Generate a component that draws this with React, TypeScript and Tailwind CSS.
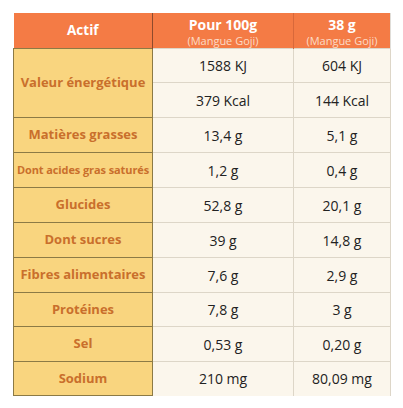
const rows: { label: string; a: string; b: string; small?: boolean }[] = [
  { label: 'Matières grasses', a: '13,4 g', b: '5,1 g' },
  { label: 'Dont acides gras saturés', a: '1,2 g', b: '0,4 g', small: true },
  { label: 'Glucides', a: '52,8 g', b: '20,1 g' },
  { label: 'Dont sucres', a: '39 g', b: '14,8 g' },
  { label: 'Fibres alimentaires', a: '7,6 g', b: '2,9 g' },
  { label: 'Protéines', a: '7,8 g', b: '3 g' },
  { label: 'Sel', a: '0,53 g', b: '0,20 g' },
  { label: 'Sodium', a: '210 mg', b: '80,09 mg' },
];

const labelCell =
  'border-t border-l border-r border-[#8c7a45] bg-[#f9d57f] text-center font-bold text-[#c96f2c]';
const dataCell =
  'border-t border-r border-[#ddd6c8] bg-[#fbf6ec] text-center text-[14px] text-[#222]';

export default function App() {
  return (
    <div className="h-[408px] w-[403px] bg-white pl-[13px] pt-[13px] font-['Open_Sans',sans-serif]">
      <table className="w-[377px] table-fixed border-collapse">
        <colgroup>
          <col className="w-[139px]" />
          <col className="w-[141px]" />
          <col className="w-[97px]" />
        </colgroup>
        <thead>
          <tr className="h-[35px] bg-[#f47b45] text-white">
            <th className="border-r border-[#8e4a2c] text-[13.5px] font-bold">Actif</th>
            <th className="border-r border-[#d8683a] p-0 align-top font-bold">
              <div className="pt-[2px] text-[14px] leading-[19px]">Pour 100g</div>
              <div className="text-[11px] leading-[14px] font-normal text-[#fcdcc6]">(Mangue Goji)</div>
            </th>
            <th className="border-r border-[#e0ddd8] p-0 align-top font-bold">
              <div className="pt-[2px] text-[14px] leading-[19px]">38 g</div>
              <div className="text-[11px] leading-[14px] font-normal text-[#fcdcc6]">(Mangue Goji)</div>
            </th>
          </tr>
        </thead>
        <tbody>
          <tr className="h-[34px]">
            <td rowSpan={2} className={`${labelCell} text-[13px]`}>
              Valeur énergétique
            </td>
            <td className={dataCell}>1588 KJ</td>
            <td className={dataCell}>604 KJ</td>
          </tr>
          <tr className="h-[35px]">
            <td className={dataCell}>379 Kcal</td>
            <td className={dataCell}>144 Kcal</td>
          </tr>
          {rows.map((r, i) => (
            <tr key={r.label} className={i === 5 || i === 7 ? 'h-[34px]' : 'h-[35px]'}>
              <td
                className={`${labelCell} whitespace-nowrap ${r.small ? 'text-[11px] tracking-[-0.1px]' : 'text-[13px]'} ${
                  i === rows.length - 1 ? 'border-b' : ''
                }`}
              >
                {r.label}
              </td>
              <td className={dataCell}>{r.a}</td>
              <td className={dataCell}>{r.b}</td>
            </tr>
          ))}
        </tbody>
      </table>
    </div>
  );
}
